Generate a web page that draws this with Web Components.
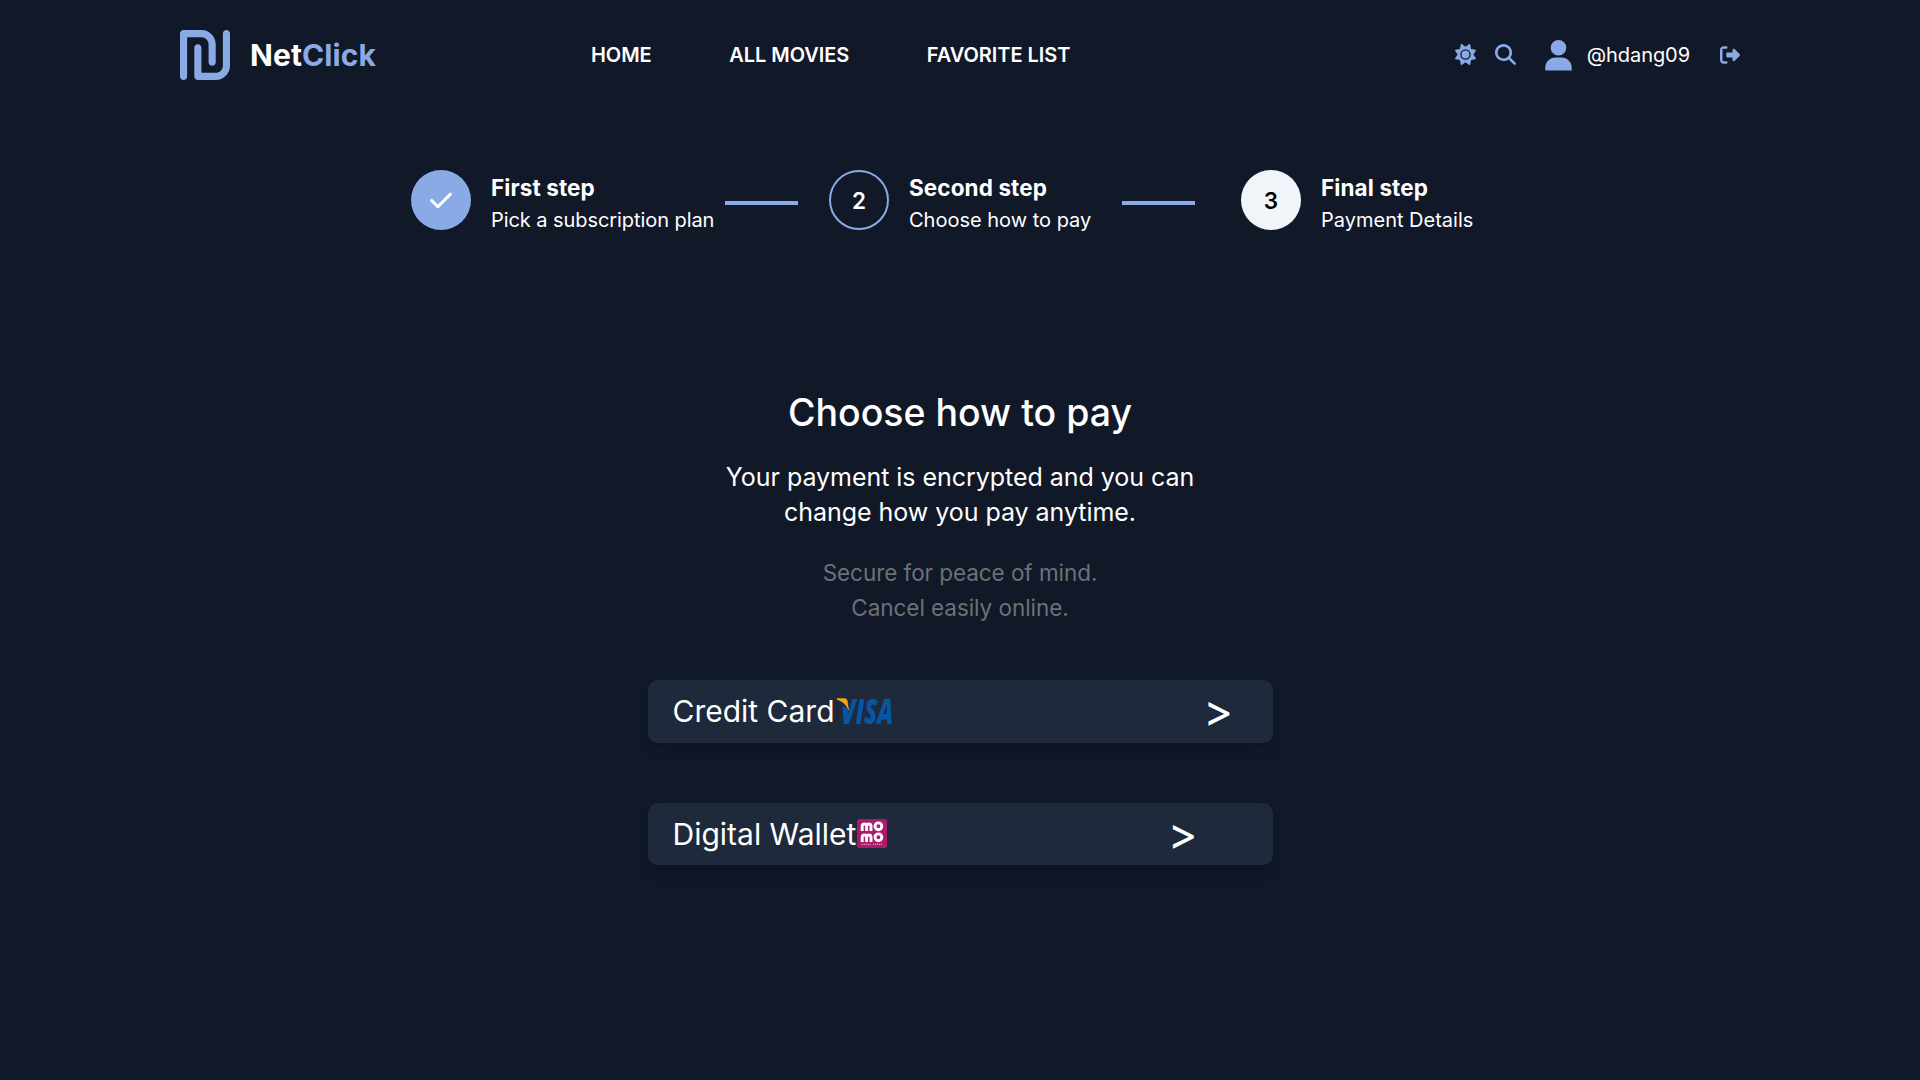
<!DOCTYPE html>
<html lang="en">
<head>
<meta charset="utf-8">
<title>NetClick</title>
<style>
html{font-size:20px}
body{margin:0;min-height:1080px;background:#111827;color:#fff;font-family:Inter,"Liberation Sans",sans-serif;overflow:hidden}
</style>
</head>
<body>
<net-app></net-app>
<script>
const define=(name,html)=>{
  const t=document.createElement('template');
  t.innerHTML=html;
  customElements.define(name,class extends HTMLElement{
    constructor(){super();this.attachShadow({mode:'open'}).append(t.content.cloneNode(true));}
  });
};

const ICONS={
  logo:['0 32 448 448','M32 32C14.3 32 0 46.3 0 64V448c0 17.7 14.3 32 32 32s32-14.3 32-32V96H192c35.3 0 64 28.7 64 64V320c0 17.7 14.3 32 32 32s32-14.3 32-32V160c0-70.7-57.3-128-128-128H32zM320 480c70.7 0 128-57.3 128-128V64c0-17.7-14.3-32-32-32s-32 14.3-32 32V352c0 35.3-28.7 64-64 64H192V192c0-17.7-14.3-32-32-32s-32 14.3-32 32V448c0 17.7 14.3 32 32 32H320z'],
  sun:['0 0 512 512','M361.5 1.2c5 2.1 8.6 6.6 9.6 11.9L391 121l107.9 19.8c5.3 1 9.8 4.6 11.9 9.6s1.5 10.7-1.6 15.2L446.9 256l62.3 90.3c3.1 4.5 3.7 10.2 1.6 15.2s-6.6 8.6-11.9 9.6L391 391 371.1 498.9c-1 5.3-4.6 9.8-9.6 11.9s-10.7 1.5-15.2-1.6L256 446.9l-90.3 62.3c-4.5 3.1-10.2 3.7-15.2 1.6s-8.6-6.6-9.6-11.9L121 391 13.1 371.1c-5.3-1-9.8-4.6-11.9-9.6s-1.5-10.7 1.6-15.2L65.1 256 2.8 165.7c-3.1-4.5-3.7-10.2-1.6-15.2s6.6-8.6 11.9-9.6L121 121 140.9 13.1c1-5.3 4.6-9.8 9.6-11.9s10.7-1.5 15.2 1.6L256 65.1 346.3 2.8c4.5-3.1 10.2-3.7 15.2-1.6zM160 256a96 96 0 1 1 192 0 96 96 0 1 1 -192 0zm224 0a128 128 0 1 0 -256 0 128 128 0 1 0 256 0z'],
  search:['0 0 512 512','M416 208c0 45.9-14.9 88.3-40 122.7L502.6 457.4c12.5 12.5 12.5 32.8 0 45.3s-32.8 12.5-45.3 0L330.7 376c-34.4 25.2-76.8 40-122.7 40C93.1 416 0 322.9 0 208S93.1 0 208 0S416 93.1 416 208zM208 352a144 144 0 1 0 0-288 144 144 0 1 0 0 288z'],
  user:['0 0 27 31','M13.5 0a7.8 7.8 0 1 1 0 15.6a7.8 7.8 0 1 1 0-15.6zM10.300 17.500h6.400c5.500 0 10 4.500 10 10V30.100q0 .5-.5.5H.800q-.5 0-.5-.5V27.500c0-5.500 4.500-10 10-10z'],
  logout:['0 0 512 512','M377.9 105.9L500.7 228.7c7.2 7.2 11.3 17.1 11.3 27.3s-4.1 20.1-11.3 27.3L377.9 406.1c-6.4 6.4-15 9.9-24 9.9c-18.7 0-33.9-15.2-33.9-33.9l0-62.1-128 0c-17.7 0-32-14.3-32-32l0-64c0-17.7 14.3-32 32-32l128 0 0-62.1c0-18.7 15.2-33.9 33.9-33.9c9 0 17.6 3.6 24 9.9zM160 96L96 96c-17.7 0-32 14.3-32 32l0 256c0 17.7 14.3 32 32 32l64 0c17.7 0 32 14.3 32 32s-14.3 32-32 32l-64 0c-53 0-96-43-96-96L0 128C0 75 43 32 96 32l64 0c17.7 0 32 14.3 32 32s-14.3 32-32 32z'],
  check:['0 0 448 512','M438.6 105.4c12.5 12.5 12.5 32.8 0 45.3l-256 256c-12.5 12.5-32.8 12.5-45.3 0l-128-128c-12.5-12.5-12.5-32.8 0-45.3s32.8-12.5 45.3 0L160 338.7 393.4 105.4c12.5-12.5 32.8-12.5 45.3 0z']
};
customElements.define('net-icon',class extends HTMLElement{
  constructor(){super();this.attachShadow({mode:'open'});}
  connectedCallback(){
    const [box,d]=ICONS[this.getAttribute('name')];
    this.shadowRoot.innerHTML=`<style>:host{display:block;flex:none;width:20px;height:20px}svg{display:block;width:100%;height:100%}</style><svg viewBox="${box}" fill="currentColor" aria-hidden="true"><path d="${d}"/></svg>`;
  }
});

define('net-header',`<style>
:host{display:flex;align-items:center;height:110px;padding:0 180px;box-sizing:border-box;line-height:30px}
.brand{display:flex;align-items:center;gap:20px;width:411px;font-size:30px;font-weight:700;color:#fff;letter-spacing:.08px}
.brand b{font-weight:700}
.brand b,net-icon{color:#8aaae5}
.brand net-icon{width:50px;height:50px}
nav{display:flex;gap:77.5px;font-weight:600;font-size:20px;white-space:nowrap;letter-spacing:-.04px}
.tools{margin-left:auto;display:flex;align-items:center;font-size:20px}
.sun{width:21px;height:21px;margin-right:19px;position:relative;top:-.5px}
.search{width:21px;height:21px;margin-right:29px;position:relative;top:-.5px}
.user{width:27px;height:31px;margin-right:14.5px}
.tools span{letter-spacing:-.06px}
.out{margin-left:30px}
</style>
<div class="brand"><net-icon name="logo"></net-icon><span>Net<b>Click</b></span></div>
<nav><span>HOME</span><span>ALL MOVIES</span><span>FAVORITE LIST</span></nav>
<div class="tools"><net-icon class="sun" name="sun"></net-icon><net-icon class="search" name="search"></net-icon><net-icon class="user" name="user"></net-icon><span>@hdang09</span><net-icon class="out" name="logout"></net-icon></div>`);

define('net-step',`<style>
:host{display:flex;gap:20px;white-space:nowrap}
.dot{width:60px;height:60px;box-sizing:border-box;border-radius:50%;display:flex;align-items:center;justify-content:center;font-size:22.5px;font-weight:600;line-height:35px}
:host([state=done]) .dot{background:#8aaae5}
:host([state=current]) .dot{border:2px solid #8aaae5}
:host([state=next]) .dot{background:#f1f5f9;color:#000}
.t{font-size:22.5px;line-height:35px;font-weight:700;letter-spacing:.1px}
.s{font-size:20px;line-height:30px;letter-spacing:var(--track,0)}
</style><div class="dot"><slot name="mark"></slot></div><div><div class="t"><slot name="title"></slot></div><div class="s"><slot></slot></div></div>`);

define('net-steps',`<style>
:host{display:flex;padding:60px 0 0 411px}
i{width:73px;height:4px;background:#8aaae5;margin-top:31px}
net-icon{width:22px;height:25px;color:#fff}
.a{width:314px;--track:-.07px}.b{width:293px}
.l1{margin-right:31px}.l2{margin-right:46px}
</style>
<net-step class="a" state="done"><net-icon slot="mark" name="check"></net-icon><span slot="title">First step</span>Pick a subscription plan</net-step><i class="l1"></i>
<net-step class="b" state="current"><span slot="mark">2</span><span slot="title">Second step</span>Choose how to pay</net-step><i class="l2"></i>
<net-step state="next"><span slot="mark">3</span><span slot="title">Final step</span>Payment Details</net-step>`);

define('pay-option',`<style>
:host{display:flex;align-items:center;box-sizing:border-box;width:625px;height:62.5px;padding:0 var(--end,39.5px) 0 25px;border-radius:10px;background:#1e293b;box-shadow:0 10px 15px -3px rgba(0,0,0,.1),0 4px 6px -4px rgba(0,0,0,.1);font-size:30px;line-height:40px}
.arrow{margin-left:auto;font-size:45px;line-height:50px;font-weight:400}
</style><span><slot></slot></span><slot name="brand"></slot><span class="arrow">&gt;</span>`);

define('visa-mark',`<style>:host{display:block;width:58px;height:26px;margin-left:2.5px}svg{display:block;overflow:visible}</style>
<svg width="58" height="26" viewBox="0 0 58 26"><text x="4" y="25.800" textLength="52.500" lengthAdjust="spacingAndGlyphs" font-family="Open Sans" font-weight="800" font-style="italic" font-size="34.500" fill="#0657a3">VISA</text>
<path d="M0 -1H10L11.200 12.500L5 9z" fill="#1e293b"/><path d="M5.600 8.500L10.500 10L11 16L6 17z" fill="#0657a3"/><path d="M0 .6H7.500C9.300.6 10 1.500 10.300 3.300L11.700 12C9.500 6.500 6 3.500 0 1.400z" fill="#f9a51a" stroke="#f9a51a" stroke-width=".5"/></svg>`);

define('momo-mark',`<style>:host{display:block;width:30px;height:29px;margin-left:1px}svg{display:block}</style>
<svg width="30" height="29" viewBox="0 0 30 29"><rect width="30" height="29" rx="2.500" fill="#ad1a6c"/>
<g id="m" fill="none" stroke="#fff" stroke-width="2.900"><path d="M5.200 12V7.200a2.200 2.200 0 0 1 4.400 0V12V7.200a2.200 2.200 0 0 1 4.400 0V12"/><circle cx="21.400" cy="7.300" r="3.400"/></g><use href="#m" y="11"/>
<path d="M4.500 25.300h9.500M16 25.300h10" stroke="#fff" stroke-opacity=".65" stroke-width="1" stroke-dasharray="1.300 .7"/></svg>`);

define('pay-panel',`<style>
:host{display:flex;flex-direction:column;align-items:center;text-align:center;padding-top:155px}
h1{margin:0;font-size:37.5px;line-height:45px;font-weight:500}
p{margin:25px 0 0;font-size:25px;line-height:35px;letter-spacing:-.04px}
p.note{font-size:22.5px;color:#6f7076;letter-spacing:-.06px}
.list{display:flex;flex-direction:column;gap:60px;margin-top:55px;text-align:left}
.wallet{--end:75px}
</style>
<h1>Choose how to pay</h1>
<p>Your payment is encrypted and you can<br>change how you pay anytime.</p>
<p class="note">Secure for peace of mind.<br>Cancel easily online.</p>
<div class="list"><pay-option>Credit Card<visa-mark slot="brand"></visa-mark></pay-option><pay-option class="wallet">Digital Wallet<momo-mark slot="brand"></momo-mark></pay-option></div>`);

define('net-app',`<style>:host{display:block}</style><net-header></net-header><net-steps></net-steps><pay-panel></pay-panel>`);
</script>
</body>
</html>
